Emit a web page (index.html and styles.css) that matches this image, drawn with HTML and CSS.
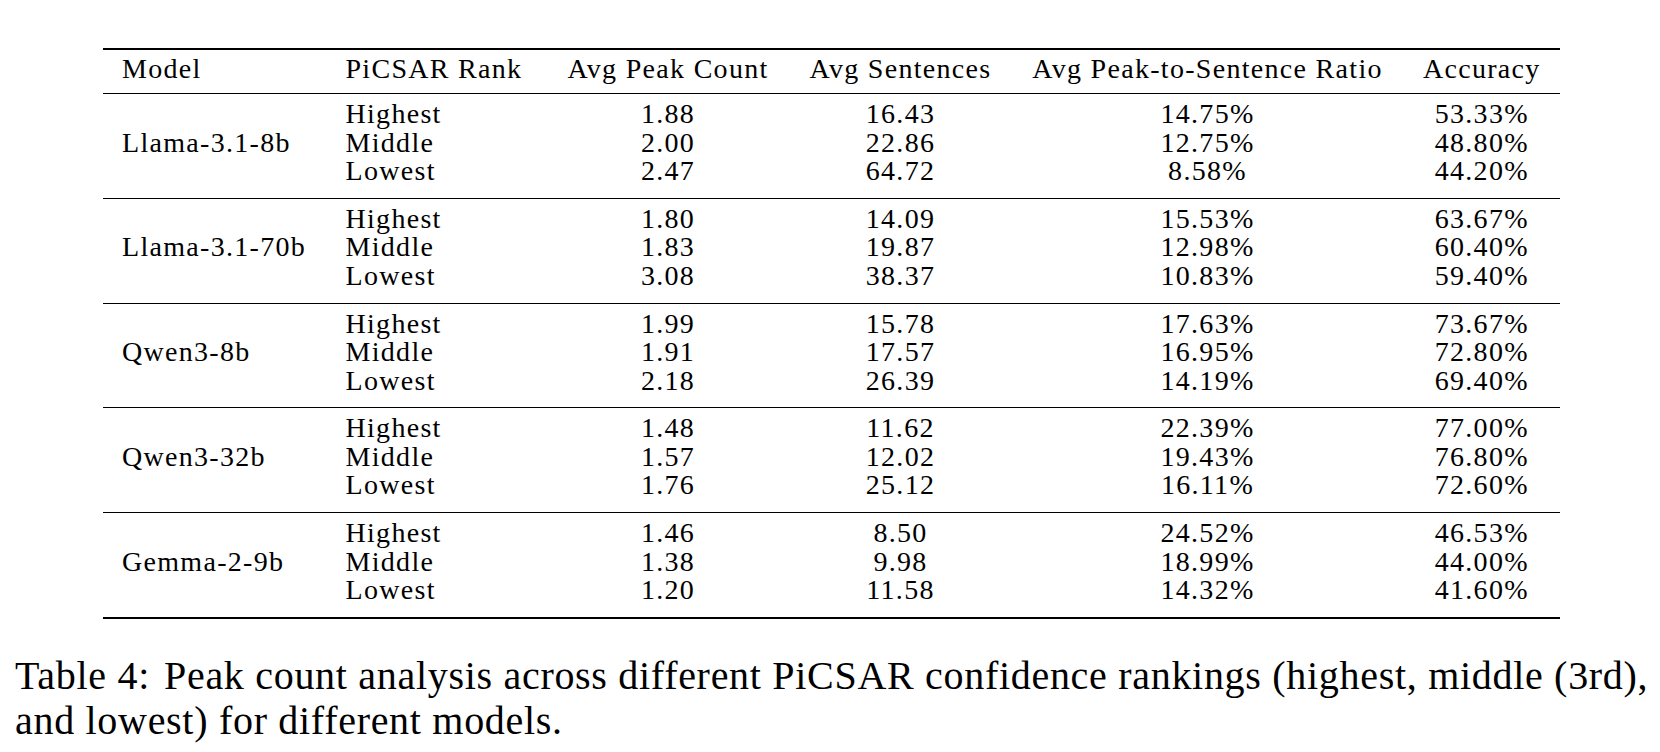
FILE: index.html
```html
<!DOCTYPE html>
<html>
<head>
<meta charset="utf-8">
<link rel="stylesheet" href="styles.css">
</head>
<body>
<div class="page">
  <div class="table">
    <div class="head grid">
      <div class="c-model">Model</div>
      <div class="c-rank">PiCSAR Rank</div>
      <div class="c-num">Avg Peak Count</div>
      <div class="c-num">Avg Sentences</div>
      <div class="c-num">Avg Peak-to-Sentence Ratio</div>
      <div class="c-num">Accuracy</div>
    </div>
    <div class="group grid">
      <div class="c-model mid">Llama-3.1-8b</div>
      <div class="c-rank">Highest<br>Middle<br>Lowest</div>
      <div class="c-num">1.88<br>2.00<br>2.47</div>
      <div class="c-num">16.43<br>22.86<br>64.72</div>
      <div class="c-num">14.75%<br>12.75%<br>8.58%</div>
      <div class="c-num">53.33%<br>48.80%<br>44.20%</div>
    </div>
    <div class="group grid">
      <div class="c-model mid">Llama-3.1-70b</div>
      <div class="c-rank">Highest<br>Middle<br>Lowest</div>
      <div class="c-num">1.80<br>1.83<br>3.08</div>
      <div class="c-num">14.09<br>19.87<br>38.37</div>
      <div class="c-num">15.53%<br>12.98%<br>10.83%</div>
      <div class="c-num">63.67%<br>60.40%<br>59.40%</div>
    </div>
    <div class="group grid">
      <div class="c-model mid">Qwen3-8b</div>
      <div class="c-rank">Highest<br>Middle<br>Lowest</div>
      <div class="c-num">1.99<br>1.91<br>2.18</div>
      <div class="c-num">15.78<br>17.57<br>26.39</div>
      <div class="c-num">17.63%<br>16.95%<br>14.19%</div>
      <div class="c-num">73.67%<br>72.80%<br>69.40%</div>
    </div>
    <div class="group grid">
      <div class="c-model mid">Qwen3-32b</div>
      <div class="c-rank">Highest<br>Middle<br>Lowest</div>
      <div class="c-num">1.48<br>1.57<br>1.76</div>
      <div class="c-num">11.62<br>12.02<br>25.12</div>
      <div class="c-num">22.39%<br>19.43%<br>16.11%</div>
      <div class="c-num">77.00%<br>76.80%<br>72.60%</div>
    </div>
    <div class="group grid">
      <div class="c-model mid">Gemma-2-9b</div>
      <div class="c-rank">Highest<br>Middle<br>Lowest</div>
      <div class="c-num">1.46<br>1.38<br>1.20</div>
      <div class="c-num">8.50<br>9.98<br>11.58</div>
      <div class="c-num">24.52%<br>18.99%<br>14.32%</div>
      <div class="c-num">46.53%<br>44.00%<br>41.60%</div>
    </div>
  </div>
  <p class="caption"><span class="label">Table 4:</span>Peak count analysis across different PiCSAR confidence rankings (highest, middle (3rd),<br>and lowest) for different models.</p>
</div>
</body>
</html>
```

FILE: styles.css
```css
html, body {
  margin: 0;
  padding: 0;
  background: #ffffff;
}

body {
  font-family: "Liberation Serif", Tinos, "Nimbus Roman", FreeSerif, "Noto Serif", "DejaVu Serif", "Times New Roman", Times, serif;
  color: #000000;
}

.page {
  padding-top: 48px;
}

.table {
  margin-left: 103px;
  width: 1457px;
  border-top: 2px solid #000;
  border-bottom: 2px solid #000;
  font-size: 28px;
  line-height: 28.5px;
  letter-spacing: 1.3px;
}

.grid {
  display: grid;
  grid-template-columns: 224.5px 219px 243px 222px 392px 156.5px;
}

.head {
  padding-top: 5px;
  padding-bottom: 9.5px;
  border-bottom: 1px solid #000;
}

.group {
  padding-top: 6px;
  padding-bottom: 12.3px;
}

.group + .group {
  border-top: 1px solid #000;
}

.c-model {
  padding-left: 19px;
  white-space: nowrap;
}

.c-rank {
  padding-left: 18px;
  white-space: nowrap;
}

.c-num {
  text-align: center;
  white-space: nowrap;
}

.mid {
  align-self: center;
}

.caption {
  margin: 34px 0 0 15px;
  font-size: 40px;
  line-height: 45px;
  letter-spacing: 0.7px;
  white-space: nowrap;
}

.caption .label {
  margin-right: 14px;
}
```
